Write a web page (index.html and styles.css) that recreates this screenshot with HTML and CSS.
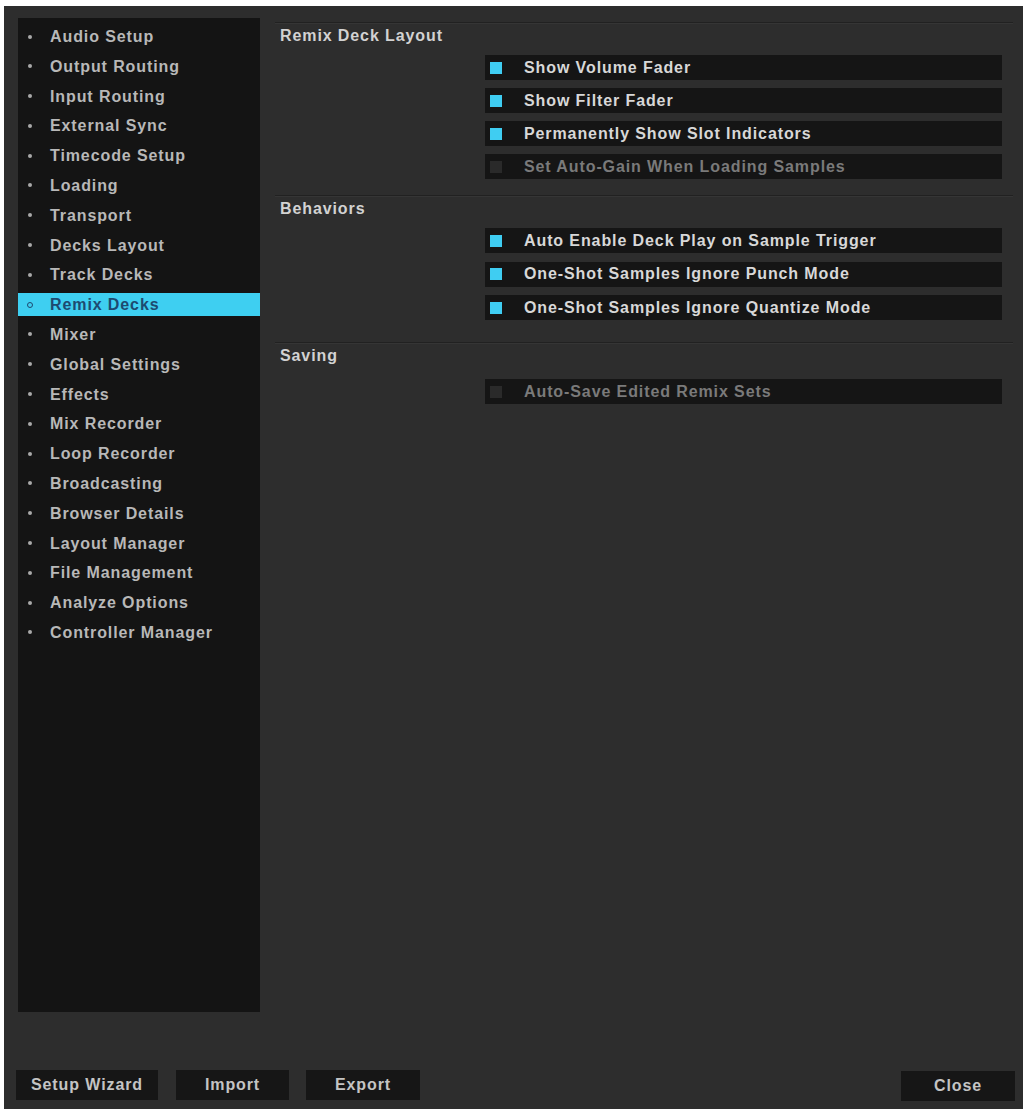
FILE: index.html
```html
<!DOCTYPE html>
<html>
<head>
<meta charset="utf-8">
<link rel="stylesheet" href="styles.css">
</head>
<body>
<div class="window">
  <div class="main">
    <nav class="sidebar">
      <div class="item"><span class="dot"></span>Audio Setup</div>
      <div class="item"><span class="dot"></span>Output Routing</div>
      <div class="item"><span class="dot"></span>Input Routing</div>
      <div class="item"><span class="dot"></span>External Sync</div>
      <div class="item"><span class="dot"></span>Timecode Setup</div>
      <div class="item"><span class="dot"></span>Loading</div>
      <div class="item"><span class="dot"></span>Transport</div>
      <div class="item"><span class="dot"></span>Decks Layout</div>
      <div class="item"><span class="dot"></span>Track Decks</div>
      <div class="item selected"><span class="dot"></span>Remix Decks</div>
      <div class="item"><span class="dot"></span>Mixer</div>
      <div class="item"><span class="dot"></span>Global Settings</div>
      <div class="item"><span class="dot"></span>Effects</div>
      <div class="item"><span class="dot"></span>Mix Recorder</div>
      <div class="item"><span class="dot"></span>Loop Recorder</div>
      <div class="item"><span class="dot"></span>Broadcasting</div>
      <div class="item"><span class="dot"></span>Browser Details</div>
      <div class="item"><span class="dot"></span>Layout Manager</div>
      <div class="item"><span class="dot"></span>File Management</div>
      <div class="item"><span class="dot"></span>Analyze Options</div>
      <div class="item"><span class="dot"></span>Controller Manager</div>
    </nav>
    <div class="content">
      <section class="section sec-layout">
        <div class="sec-title">Remix Deck Layout</div>
        <div class="rows">
          <div class="row"><span class="check on"></span>Show Volume Fader</div>
          <div class="row"><span class="check on"></span>Show Filter Fader</div>
          <div class="row"><span class="check on"></span>Permanently Show Slot Indicators</div>
          <div class="row disabled"><span class="check"></span>Set Auto-Gain When Loading Samples</div>
        </div>
      </section>
      <section class="section sec-behaviors">
        <div class="sec-title">Behaviors</div>
        <div class="rows">
          <div class="row"><span class="check on"></span>Auto Enable Deck Play on Sample Trigger</div>
          <div class="row"><span class="check on"></span>One-Shot Samples Ignore Punch Mode</div>
          <div class="row"><span class="check on"></span>One-Shot Samples Ignore Quantize Mode</div>
        </div>
      </section>
      <section class="section sec-saving">
        <div class="sec-title">Saving</div>
        <div class="rows">
          <div class="row disabled"><span class="check"></span>Auto-Save Edited Remix Sets</div>
        </div>
      </section>
    </div>
  </div>
  <div class="footer">
    <button class="btn btn-wizard">Setup Wizard</button>
    <button class="btn btn-import">Import</button>
    <button class="btn btn-export">Export</button>
    <button class="btn btn-close">Close</button>
  </div>
</div>
</body>
</html>
```
FILE: styles.css
```css
html, body {
  margin: 0;
  padding: 0;
  background: #ffffff;
}

body {
  font-family: "Liberation Sans", Arial, sans-serif;
  font-weight: bold;
  font-size: 16px;
  letter-spacing: 0.9px;
}

.window {
  margin: 6px 0 0 4px;
  height: 1103px;
  background: #2d2d2d;
  box-sizing: border-box;
  padding: 12px 0 0 14px;
  display: flex;
  flex-direction: column;
}

.main {
  display: flex;
  height: 994px;
}

.sidebar {
  width: 242px;
  height: 994px;
  background: #141414;
  box-sizing: border-box;
  padding-top: 7px;
  display: flex;
  flex-direction: column;
  gap: 6.8px;
}

.item {
  height: 23px;
  line-height: 23px;
  color: #b8b8b8;
  display: flex;
  align-items: center;
  white-space: nowrap;
}

.dot {
  width: 4px;
  height: 4px;
  border-radius: 50%;
  background: #a8a8a8;
  margin-left: 10px;
  margin-right: 18px;
  flex: none;
}

.item.selected {
  background: #3ecff1;
  color: #1d4a70;
}

.item.selected .dot {
  width: 4px;
  height: 4px;
  background: transparent;
  border: 1.5px solid #1d4a70;
  margin-left: 9px;
  margin-right: 17px;
}

.content {
  flex: 1;
  margin: 0 10px 0 15px;
  padding-top: 4px;
}

.section {
  border-top: 1px solid #212121;
  box-shadow: inset 0 1px 0 #353535;
  padding-bottom: 16px;
}

.sec-title {
  height: 25px;
  line-height: 25px;
  padding-left: 5px;
  color: #d2d2d2;
}

.rows {
  margin-top: 7px;
  padding: 0 11px 0 210px;
  display: flex;
  flex-direction: column;
  gap: 8px;
}

.sec-behaviors .rows {
  gap: 8.5px;
}

.sec-behaviors {
  padding-bottom: 22px;
}

.sec-saving .rows {
  margin-top: 11px;
}

.row {
  height: 25px;
  background: #151515;
  display: flex;
  align-items: center;
  color: #d8d8d8;
  white-space: nowrap;
}

.check {
  width: 12px;
  height: 12px;
  margin-left: 5px;
  margin-right: 22px;
  background: #2a2a2a;
  flex: none;
}

.check.on {
  background: #3fcdf2;
}

.row.disabled {
  color: #7a7a7a;
}

.footer {
  margin-top: 58px;
  margin-left: -2px;
  display: flex;
  align-items: flex-start;
}

.btn {
  font-family: "Liberation Sans", Arial, sans-serif;
  font-weight: bold;
  font-size: 16px;
  letter-spacing: 0.9px;
  color: #c4c4c4;
  background: #161616;
  border: none;
  height: 30px;
  padding: 0;
  margin: 0;
}

.btn-wizard {
  width: 142px;
}

.btn-import {
  width: 113px;
  margin-left: 18px;
}

.btn-export {
  width: 114px;
  margin-left: 17px;
}

.btn-close {
  width: 114px;
  margin-left: auto;
  margin-right: 8px;
  margin-top: 1px;
}
```
